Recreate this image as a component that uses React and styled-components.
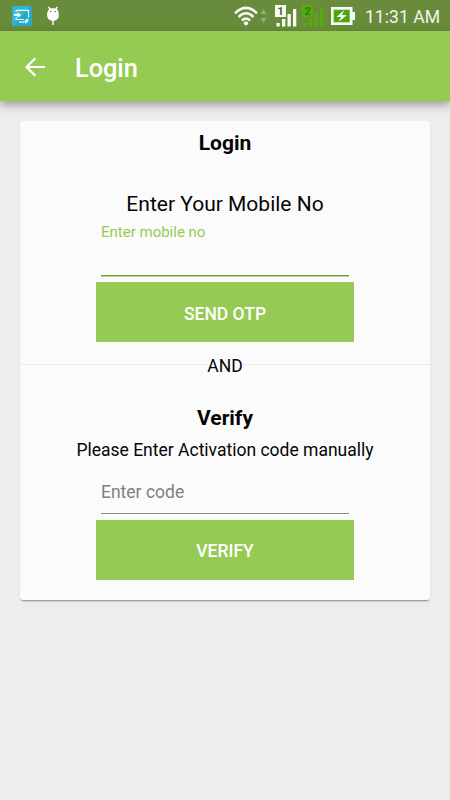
import React from "react";
import styled, { createGlobalStyle } from "styled-components";

const signals = [
  { id: "1", color: "#f8faf5", digit: "#4c6b26", plate: "#f8faf5" },
  { id: "2", color: "#55ad0b", digit: "#3f7220", plate: "#55ad0b" }
];

const CastIcon = () => (
  <svg width="20" height="20" viewBox="0 0 20 20">
    <rect width="20" height="20" rx="2" fill="#25a9c6" />
    <path d="M0 2a2 2 0 0 1 2-2h16L2 20a2 2 0 0 1-2-2z" fill="#32b7d3" />
    <path
      d="M4.200 6V4.300h12.300v7.200M4.200 11.500v2h7.600M7 16.200h5"
      fill="none"
      stroke="#edfaff"
      strokeWidth="1.200"
    />
    <path d="M2 7.800h3.600V6l3.600 2.900-3.600 2.900V10H2z" fill="#fff" />
    <path d="M12.200 15.200l2.400-2.800 2.400 1.400-1.800 3.300-2.100.3z" fill="#d2eef5" />
  </svg>
);

const DebugIcon = () => (
  <svg width="14" height="20" viewBox="0 0 14 20">
    <path
      d="M2.500.8l2 2.700M11.500.8l-2 2.700M7 14v5"
      stroke="#fff"
      strokeWidth="1.400"
      fill="none"
    />
    <path
      d="M7 2.300c3.600 0 5.600 2 5.800 4.900v2.600c0 3-2.600 5-5.800 5s-5.800-2-5.800-5V7.200C1.400 4.300 3.400 2.300 7 2.300z"
      fill="#fff"
    />
    <circle cx="4.800" cy="5.600" r=".8" fill="#688c3b" />
    <circle cx="9.200" cy="5.600" r=".8" fill="#688c3b" />
  </svg>
);

const WifiIcon = () => (
  <svg width="24" height="20" viewBox="0 0 24 20">
    <g fill="none" stroke="#f8faf5" strokeWidth="2.500">
      <path d="M1 7.300Q12-3.600 23 7.300" />
      <path d="M4.500 11Q12 3.600 19.500 11" />
      <path d="M7.900 14.500Q12 10.500 16.100 14.500" />
    </g>
    <circle cx="12" cy="17.300" r="2.100" fill="#f8faf5" />
  </svg>
);

const TrafficIcon = () => (
  <svg width="7" height="16" viewBox="0 0 7 16">
    <path d="M3.500 1L6.500 6h-6zM.5 10h6l-3 5z" fill="#95ad78" />
  </svg>
);

const SignalIcon = ({ id, color, digit, plate }) => (
  <svg width="22" height="22" viewBox="0 0 22 22">
    <path
      d="M1.500 18h3.200v3.500H1.500zM7 14h3.300v7.500H7zM12.500 9h3.300v12.500h-3.300zM18 4h3.300v17.500H18z"
      fill={color}
    />
    <rect width="11" height="12" fill={plate} />
    <text
      x="5.500"
      y="10"
      textAnchor="middle"
      fontFamily="Roboto, sans-serif"
      fontSize="11.500"
      fontWeight="700"
      fill={digit}
    >
      {id}
    </text>
  </svg>
);

const BatteryIcon = () => (
  <svg width="24" height="18" viewBox="0 0 24 18">
    <path d="M0 0h21.500v5H24v8h-2.500v5H0z" fill="#f8faf5" />
    <path d="M2.700 2.700h16v12.600h-16z" fill="#4fa50f" />
    <path d="M13.300 3L5.500 9.900l4.700.2-2.900 5 8.500-6.800-4.900-.3z" fill="#fff" />
  </svg>
);

const BackIcon = () => (
  <svg width="22" height="20" viewBox="0 0 22 20">
    <path
      d="M21 10H3M11.300 1.200L2.500 10l8.800 8.800"
      fill="none"
      stroke="#fff"
      strokeWidth="2.200"
    />
  </svg>
);

const App = () => {
  return (
    <Screen>
      <GlobalStyle />
      <StatusBar>
        <CastIcon />
        <DebugIcon />
        <StatusRight>
          <WifiIcon />
          <TrafficIcon />
          <Signals>
            {signals.map(signal => (
              <SignalIcon key={signal.id} {...signal} />
            ))}
          </Signals>
          <BatteryIcon />
          <Clock>11:31 AM</Clock>
        </StatusRight>
      </StatusBar>
      <AppBar>
        <BackButton aria-label="Back">
          <BackIcon />
        </BackButton>
        <AppTitle>Login</AppTitle>
      </AppBar>
      <Card>
        <CardTitle>Login</CardTitle>
        <Prompt>Enter Your Mobile No</Prompt>
        <MobileField>
          <MobileLabel htmlFor="mobile">Enter mobile no</MobileLabel>
          <Input id="mobile" type="tel" $active />
        </MobileField>
        <Button $tall>SEND OTP</Button>
        <Divider>
          <span>AND</span>
        </Divider>
        <VerifyTitle>Verify</VerifyTitle>
        <Hint>Please Enter Activation code manually</Hint>
        <Input type="text" placeholder="Enter code" />
        <Button>VERIFY</Button>
      </Card>
    </Screen>
  );
};

const GlobalStyle = createGlobalStyle`
  * {
    box-sizing: border-box;
  }
  body {
    margin: 0;
    background: #ededed;
    font-family: Roboto, sans-serif;
    color: #050505;
  }
`;

const Screen = styled.div`
  height: 100vh;
  overflow: hidden;
`;

const StatusBar = styled.header`
  display: flex;
  align-items: center;
  gap: 14px;
  height: 31px;
  padding: 0 10px 0 12px;
  background: #688c3b;
`;

const StatusRight = styled.div`
  display: flex;
  align-items: center;
  margin-left: auto;
  gap: 2px;
`;

const Signals = styled.div`
  display: flex;
  gap: 5px;
  margin: 0 5px 0 6px;
`;

const Clock = styled.span`
  margin-left: 8px;
  padding-top: 2px;
  font-size: 17.6px;
  line-height: 24px;
  white-space: nowrap;
  color: #f1f5eb;
`;

const AppBar = styled.div`
  display: flex;
  align-items: center;
  height: 70px;
  padding: 2px 24px 0;
  background: #96cb53;
  box-shadow: 0 4px 9px rgba(0, 0, 0, 0.35);
`;

const BackButton = styled.button`
  display: flex;
  padding: 0;
  border: none;
  background: transparent;
  cursor: pointer;
`;

const AppTitle = styled.h1`
  margin: 0 0 0 29px;
  padding-top: 3px;
  font-size: 25.3px;
  font-weight: 500;
  line-height: 32px;
  color: #fff;
`;

const Card = styled.main`
  display: flex;
  flex-direction: column;
  align-items: center;
  height: 479px;
  margin: 20px 20px 0;
  padding-top: 10px;
  border-radius: 3px;
  background: #fbfbfb;
  box-shadow: 0 2px 2px -1px rgba(0, 0, 0, 0.45);
`;

const CardTitle = styled.h2`
  margin: 0;
  font-size: 21px;
  font-weight: 700;
  line-height: 24px;
`;

const VerifyTitle = styled(CardTitle)`
  margin-top: 28px;
`;

const Prompt = styled.p`
  margin: 35px 0 0;
  font-size: 21px;
  line-height: 28px;
`;

const MobileField = styled.div`
  display: flex;
  flex-direction: column;
  margin-top: 4px;
`;

const MobileLabel = styled.label`
  font-size: 15px;
  line-height: 21px;
  color: #96cb53;
`;

const Input = styled.input`
  width: 248px;
  height: ${props => (props.$active ? "33px" : "43px")};
  margin-top: ${props => (props.$active ? "0" : "9px")};
  padding: 0;
  border: none;
  border-bottom: 1px solid ${props => (props.$active ? "#6d983b" : "#8d8d8d")};
  box-shadow: ${props => (props.$active ? "0 1px 0 #b9d397" : "none")};
  border-radius: 0;
  outline: none;
  background: transparent;
  font: 17.5px Roboto, sans-serif;

  &::placeholder {
    color: #808080;
  }
`;

const Button = styled.button`
  width: 258px;
  height: 60px;
  margin-top: 6px;
  padding: ${props => (props.$tall ? "4px" : "2px")} 0 0;
  border: none;
  background: #95cb54;
  color: #fff;
  font: 500 17.5px Roboto, sans-serif;
  cursor: pointer;
`;

const Divider = styled.div`
  display: flex;
  align-items: center;
  align-self: stretch;
  margin-top: 12px;
  font-size: 17.5px;
  line-height: 24px;

  &::before,
  &::after {
    content: "";
    flex: 1;
    height: 1px;
    margin-bottom: 4px;
    background: #ebebeb;
  }
`;

const Hint = styled.p`
  margin: 8px 0 0;
  font-size: 17.5px;
  line-height: 24px;
  white-space: nowrap;
`;

export default App;
